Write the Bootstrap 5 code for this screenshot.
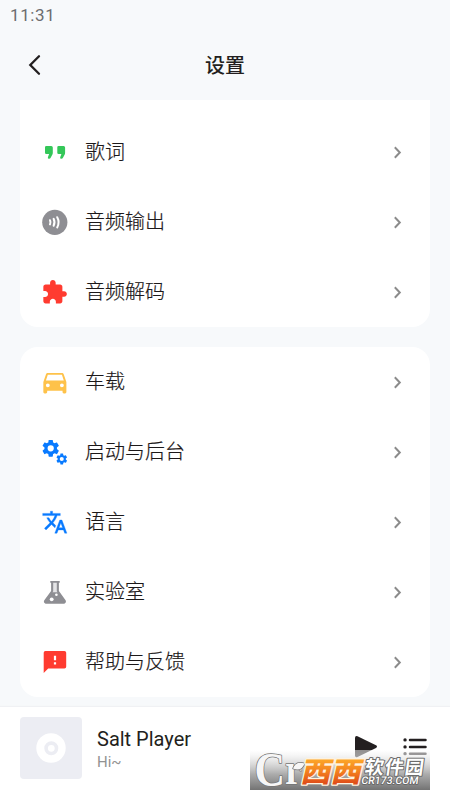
<!DOCTYPE html>
<html lang="zh-CN">
<head>
<meta charset="utf-8">
<meta name="viewport" content="width=device-width, initial-scale=1">
<title>设置</title>
<link href="https://cdn.jsdelivr.net/npm/bootstrap@5.3.0/dist/css/bootstrap.min.css" rel="stylesheet">
<style>
  body { background: #f7f9fb; color: #231f20; font-family: Roboto, "Noto Sans CJK SC", sans-serif; }
  .screen { width: 450px; height: 800px; }
  .status { height: 32px; padding-left: 10px; font-size: 17px; letter-spacing: .6px; color: #6c6d6f; }
  .topbar { height: 68px; padding: 0 25px 3px; }
  .topbar h1 { font-size: 20px; font-weight: 500; padding-top: 2px; }
  .side { width: 20px; }
  .panel { border-radius: 18px; background: #fff; }
  .panel-cut { border-radius: 0 0 18px 18px; padding-top: 17px; margin-bottom: 20px; }
  .entry { height: 70px; padding: 0 27px 0 22px; background: transparent; font-size: 20px; line-height: 30px; color: #1c1819; font-weight: 300; -webkit-text-stroke: .2px #1c1819; }
  .entry span { margin-left: 17px; }
  .entry svg:first-child { width: 26px; height: 26px; overflow: visible; }
  .player { height: 93px; padding: 10px 20px 0; background: #fff; box-shadow: 0 -1px 1px #f0f1f4; }
  .cover { width: 62px; height: 62px; border-radius: 4px; background: #ecedf3; }
  .track { margin: 10px 0 0 15px; }
  .song { font-size: 20px; line-height: 24px; }
  .artist { font-size: 15px; line-height: 22px; color: #929292; }
  .controls { margin-top: 18px; }
  .stamp { left: 250px; top: 750px; width: 180px; height: 40px; overflow: visible; }
</style>
<script src="https://cdn.jsdelivr.net/npm/bootstrap@5.3.0/dist/js/bootstrap.bundle.min.js"></script>
</head>
<body>
<div class="screen position-relative overflow-hidden d-flex flex-column">
  <div class="status d-flex align-items-center">11:31</div>
  <header class="topbar d-flex align-items-center justify-content-between">
    <svg class="side" width="20" height="24" viewBox="0 0 20 24" fill="none" stroke="#231f20" stroke-width="2.3" stroke-linecap="round"><path d="M14 3.2 5.300 12 14 20.800"/></svg>
    <h1 class="m-0">设置</h1>
    <div class="side"></div>
  </header>

  <main class="flex-grow-1 px-3 mx-1 overflow-hidden">
    <div class="list-group list-group-flush panel panel-cut">
      <a class="entry list-group-item border-0 d-flex align-items-center">
        <svg viewBox="0 0 26 26" fill="#34c759"><path id="q" d="M4.3 7h5a1.5 1.5 0 0 1 1.5 1.5v5.2q0 1-.4 1.800l-1.600 3q-.6 1.200-1.700 1.200-1.700 0-1.200-1.500l1.200-3.200H4.300A1.300 1.300 0 0 1 3 13.700V8.300A1.300 1.300 0 0 1 4.300 7z"/><use href="#q" x="12.300"/></svg>
        <span>歌词</span><svg class="ms-auto" width="10" height="14" viewBox="0 0 10 14" fill="none" stroke="#8b8b8b" stroke-width="2"><path d="m1.800 2.300 5 5.200-5 5.200"/></svg></a>
      <a class="entry list-group-item border-0 d-flex align-items-center">
        <svg viewBox="0 0 26 26"><circle cx="12.800" cy="13.300" r="12.600" fill="#8e8e93"/><g fill="none" stroke="#fff" stroke-width="2" stroke-linecap="round"><path d="M8 11.200q1 2.100 0 4.200M11.600 9.800q1.800 3.500 0 7M15.200 8.200q2.800 5.100 0 10.200"/></g></svg>
        <span>音频输出</span><svg class="ms-auto" width="10" height="14" viewBox="0 0 10 14" fill="none" stroke="#8b8b8b" stroke-width="2"><path d="m1.800 2.300 5 5.200-5 5.200"/></svg></a>
      <a class="entry list-group-item border-0 d-flex align-items-center">
        <svg viewBox="0 0 26 26" fill="#ff3b30"><path transform="translate(-.9 -.1) scale(1.120)" d="M20.500 11H19V7c0-1.100-.9-2-2-2h-4V3.500C13 2.120 11.880 1 10.500 1S8 2.120 8 3.500V5H4c-1.100 0-1.990.9-1.990 2v3.800H3.500c1.490 0 2.700 1.210 2.700 2.700s-1.210 2.700-2.700 2.700H2V20c0 1.100.9 2 2 2h3.800v-1.500c0-1.490 1.210-2.700 2.700-2.700s2.700 1.210 2.700 2.700V22H17c1.100 0 2-.9 2-2v-4h1.500c1.380 0 2.500-1.120 2.500-2.500S21.880 11 20.500 11z"/></svg>
        <span>音频解码</span><svg class="ms-auto" width="10" height="14" viewBox="0 0 10 14" fill="none" stroke="#8b8b8b" stroke-width="2"><path d="m1.800 2.300 5 5.200-5 5.200"/></svg></a>
    </div>

    <div class="list-group list-group-flush panel">
      <a class="entry list-group-item border-0 d-flex align-items-center">
        <svg viewBox="0 0 26 26" fill="#fec24a"><path transform="translate(-2.500 -1.200) scale(1.280)" d="M18.920 5.010C18.720 4.420 18.160 4 17.500 4h-11c-.66 0-1.210.42-1.420 1.010L3 11v8c0 .55.45 1 1 1h1c.55 0 1-.45 1-1v-1h12v1c0 .55.45 1 1 1h1c.55 0 1-.45 1-1v-8zM6.500 15.200a1.500 1.500 0 1 1 0-3 1.500 1.500 0 0 1 0 3zm11 0a1.500 1.500 0 1 1 0-3 1.500 1.500 0 0 1 0 3zM5 10l1.500-4.600h11L19 10z"/></svg>
        <span>车载</span><svg class="ms-auto" width="10" height="14" viewBox="0 0 10 14" fill="none" stroke="#8b8b8b" stroke-width="2"><path d="m1.800 2.300 5 5.200-5 5.200"/></svg></a>
      <a class="entry list-group-item border-0 d-flex align-items-center">
        <svg viewBox="0 0 26 26" fill="#087aff"><path id="gear" transform="translate(-1.740 -1.140) scale(.87)" d="M19.140 12.940c.04-.3.06-.61.06-.94 0-.32-.02-.64-.07-.94l2.030-1.580c.18-.14.23-.41.12-.61l-1.920-3.320c-.12-.22-.37-.29-.59-.22l-2.390.96c-.5-.38-1.030-.7-1.620-.94l-.36-2.540c-.04-.24-.24-.41-.48-.41h-3.840c-.24 0-.43.17-.47.41l-.36 2.540c-.59.24-1.130.57-1.620.94l-2.390-.96c-.22-.08-.47 0-.59.22L2.740 8.870c-.12.21-.08.47.12.61l2.030 1.580c-.05.3-.09.63-.09.94s.02.64.07.94l-2.030 1.580c-.18.14-.23.41-.12.61l1.920 3.320c.12.22.37.29.59.22l2.390-.96c.5.38 1.030.7 1.620.94l.36 2.540c.05.24.24.41.48.41h3.840c.24 0 .44-.17.47-.41l.36-2.540c.59-.24 1.130-.56 1.620-.94l2.390.96c.22.08.47 0 .59-.22l1.920-3.320c.12-.22.07-.47-.12-.61zM12 15.600a3.600 3.600 0 1 1 0-7.200 3.600 3.600 0 0 1 0 7.200z"/><use href="#gear" transform="translate(14.100 14) scale(.65)"/></svg>
        <span>启动与后台</span><svg class="ms-auto" width="10" height="14" viewBox="0 0 10 14" fill="none" stroke="#8b8b8b" stroke-width="2"><path d="m1.800 2.300 5 5.200-5 5.200"/></svg></a>
      <a class="entry list-group-item border-0 d-flex align-items-center">
        <svg viewBox="0 0 26 26" fill="#087aff" stroke="#087aff" stroke-width=".3"><path transform="translate(-.4 0) scale(1.100)" d="M12.870 15.070l-2.540-2.510.03-.03c1.740-1.940 2.980-4.170 3.710-6.530H17V4h-7V2H8v2H1v1.990h11.170C11.500 7.920 10.440 9.750 9 11.350 8.070 10.320 7.300 9.190 6.690 8h-2c.73 1.630 1.730 3.170 2.980 4.560l-5.090 5.020L4 19l5-5 3.110 3.110.76-2.040zM18.500 10h-2L12 22h2l1.120-3h4.750L21 22h2l-4.500-12zm-2.620 7l1.620-4.330L19.120 17h-3.240z"/></svg>
        <span>语言</span><svg class="ms-auto" width="10" height="14" viewBox="0 0 10 14" fill="none" stroke="#8b8b8b" stroke-width="2"><path d="m1.800 2.300 5 5.200-5 5.200"/></svg></a>
      <a class="entry list-group-item border-0 d-flex align-items-center">
        <svg viewBox="0 0 26 26"><path fill="#8e8e93" d="M8.300 2h9.400v1.700h-.8V12l6.700 9.200q1.100 2.300-1.300 3.500H3.600q-2.600-1.100-1.300-3.500L9.100 12V3.700h-.8z"/><path fill="#e4e4e6" d="M11.200 3.700h3.600v8.600l.7 1h-5l.7-1z"/><circle cx="14.400" cy="15.800" r="1.300" fill="#fff"/><circle cx="9.700" cy="20.300" r="1.900" fill="#fff"/></svg>
        <span>实验室</span><svg class="ms-auto" width="10" height="14" viewBox="0 0 10 14" fill="none" stroke="#8b8b8b" stroke-width="2"><path d="m1.800 2.300 5 5.200-5 5.200"/></svg></a>
      <a class="entry list-group-item border-0 d-flex align-items-center">
        <svg viewBox="0 0 26 26"><path fill="#ff3b30" d="M3.400 2h19q1.800 0 1.800 1.800v14q0 1.800-1.800 1.800H6.200l-4.500 4.500V3.800Q1.700 2 3.400 2z"/><path fill="#fff" d="M11.900 6.700h2.200v4.600h-2.200zM11.900 13.200h2.200v2.200h-2.200z"/></svg>
        <span>帮助与反馈</span><svg class="ms-auto" width="10" height="14" viewBox="0 0 10 14" fill="none" stroke="#8b8b8b" stroke-width="2"><path d="m1.800 2.300 5 5.200-5 5.200"/></svg></a>
    </div>
  </main>

  <footer class="player d-flex align-items-start flex-shrink-0">
    <div class="cover d-flex align-items-center justify-content-center">
      <svg width="30" height="30" viewBox="0 0 30 30"><circle cx="15" cy="15" r="14.700" fill="#fff"/><circle cx="15.300" cy="15.300" r="5.200" fill="none" stroke="#ecedf3" stroke-width="3.600"/></svg>
    </div>
    <div class="track">
      <div class="song">Salt Player</div>
      <div class="artist">Hi~</div>
    </div>
    <svg class="controls ms-auto" width="76" height="24" viewBox="0 0 76 24"><path fill="#231f20" d="M1 3q0-2.500 2.500-1.800L22 10.300q2 1.200 0 2.600L3.500 22Q1 22.800 1 20.500z"/><g stroke="#231f20" stroke-width="2.500" stroke-linecap="round"><path d="M56 4.900H71.500M56 11.900H71.500M56 18.700H71.500"/><path d="M51 4.900h.1M51 11.900h.1M51 18.700h.1" stroke-width="3.300"/></g></svg>
  </footer>

  <svg class="stamp position-absolute" viewBox="0 0 180 40">
    <defs>
      <linearGradient id="shade" x1="0" y1="0" x2="0" y2="1"><stop offset="0" stop-color="#fff" stop-opacity=".5"/><stop offset=".15" stop-color="#ededed" stop-opacity=".6"/><stop offset=".6" stop-color="#a8a8a8" stop-opacity=".95"/><stop offset="1" stop-color="#737373"/></linearGradient>
      <linearGradient id="flame" x1="0" y1="0" x2="0" y2="1"><stop offset=".15" stop-color="#ffb42c"/><stop offset=".55" stop-color="#f4811f"/><stop offset=".9" stop-color="#dc4617"/></linearGradient>
    </defs>
    <rect width="180" height="40" fill="url(#shade)"/>
    <g fill="#f6f6f6" stroke="#747474" stroke-width="1.500" stroke-linejoin="round" paint-order="stroke">
      <text transform="translate(4.500 35.500) scale(.88 1)" font-family="Liberation Serif, serif" font-weight="700"><tspan font-size="48">C</tspan><tspan font-size="44" dy="-2">r</tspan></text>
      <path d="M43 18.500q3-8 11.500-5-3 8.500-11.500 5z"/>
    </g>
    <g font-family="Noto Sans CJK SC, sans-serif" stroke-linejoin="round" paint-order="stroke">
      <text transform="translate(50 31.500) skewX(-13) scale(1.080 1)" font-weight="900" font-size="28" textLength="56" fill="url(#flame)" stroke="#fff3df" stroke-width="2.600">西西</text>
      <text transform="translate(114 23.500) skewX(-8)" font-weight="700" font-size="19" textLength="59" fill="#fff" stroke="#6c6c6c" stroke-width="2">软件园</text>
    </g>
    <text transform="translate(111 34.300) skewX(-8)" font-family="Roboto, sans-serif" font-weight="500" font-size="10.500" textLength="57" lengthAdjust="spacingAndGlyphs" fill="#fff" stroke="#666" stroke-width="1.700" stroke-linejoin="round" paint-order="stroke">CR173.COM</text>
  </svg>
</div>
</body>
</html>
